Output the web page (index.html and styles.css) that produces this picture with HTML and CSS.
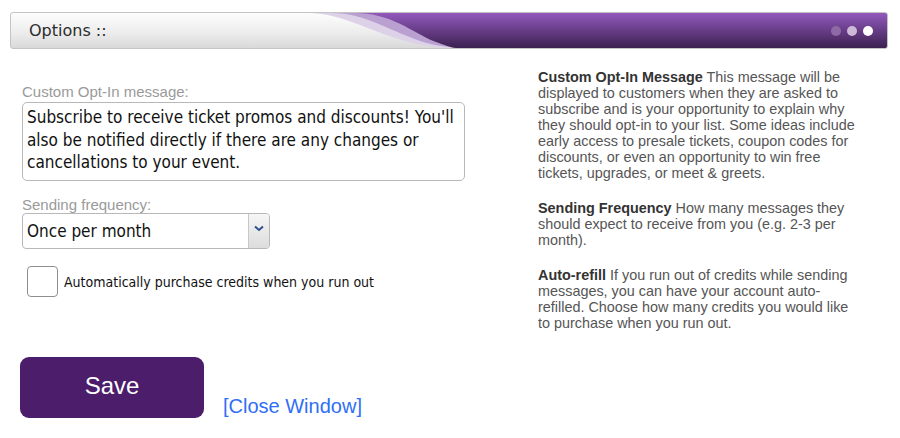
FILE: index.html
```html
<!DOCTYPE html>
<html lang="en">

<head>
    <meta charset="UTF-8">
    <meta name="viewport" content="width=device-width, initial-scale=1.0">
    <title>Options</title>
    <link rel="stylesheet" href="styles.css">
</head>

<body>
    <header class="titlebar">
        <span class="title">Options ::</span>
        <svg class="wave" viewBox="0 0 583 36" preserveAspectRatio="none">
            <defs>
                <linearGradient id="purple" x1="0" y1="0" x2="0" y2="1">
                    <stop offset="0" stop-color="#9259bd"/>
                    <stop offset="1" stop-color="#3c2150"/>
                </linearGradient>
            </defs>
            <path d="M4 0 C40 0 70 22 110 31 C130 36 150 36 175 36 L583 36 L583 0 Z" fill="#ddd1e8"/>
            <path d="M28 0 C62 0 88 20 120 30 C138 35 152 36 170 36 L583 36 L583 0 Z" fill="#b9a0d0"/>
            <path d="M50 0 C88 0 108 20 130 29 C140 33 146 35 152 36 L583 36 L583 0 Z" fill="url(#purple)"/>
        </svg>
        <div class="dots">
            <span class="dim"></span><span class="mid"></span><span></span>
        </div>
    </header>

    <main class="content">
        <form class="fields">
            <label class="label" for="msg">Custom Opt-In message:</label>
            <textarea id="msg" class="message">Subscribe to receive ticket promos and discounts! You'll also be notified directly if there are any changes or cancellations to your event.</textarea>

            <label class="label freq" for="freq">Sending frequency:</label>
            <div class="select">
                <span class="value">Once per month</span>
                <span class="arrow">
                    <svg width="10" height="7" viewBox="0 0 10 7"><path d="M1 1.5 L5 5 L9 1.5" fill="none" stroke="#2d4f8f" stroke-width="2"/></svg>
                </span>
            </div>

            <div class="check">
                <span class="box"></span>
                <span>Automatically purchase credits when you run out</span>
            </div>

            <div class="actions">
                <button type="button" class="save">Save</button>
                <a href="#" class="close">[Close Window]</a>
            </div>
        </form>

        <aside class="help">
            <p><b>Custom Opt-In Message</b> This message will be displayed to customers when they are asked to subscribe and is your opportunity to explain why they should opt-in to your list. Some ideas include early access to presale tickets, coupon codes for discounts, or even an opportunity to win free tickets, upgrades, or meet &amp; greets.</p>
            <p><b>Sending Frequency</b> How many messages they should expect to receive from you (e.g. 2-3 per month).</p>
            <p><b>Auto-refill</b> If you run out of credits while sending messages, you can have your account auto-refilled. Choose how many credits you would like to purchase when you run out.</p>
        </aside>
    </main>
</body>

</html>
```

FILE: styles.css
```css
body {
    margin: 0;
    padding: 0;
    background: #fff;
    font-family: "Liberation Sans", Arial, sans-serif;
}

.titlebar {
    position: relative;
    margin: 12px 12px 0 10px;
    height: 35px;
    border: 1px solid #c4c4c4;
    border-radius: 3px;
    background: linear-gradient(#fdfdfd, #ededed 55%, #d9d9d9);
    display: flex;
    align-items: center;
    overflow: hidden;
}

.title {
    position: relative;
    z-index: 1;
    padding-left: 18px;
    font-family: "DejaVu Sans", Verdana, sans-serif;
    font-size: 16px;
    color: #2b2b2b;
}

.wave {
    position: absolute;
    top: 0;
    right: 0;
    width: 583px;
    height: 100%;
}

.dots {
    position: absolute;
    right: 14px;
    top: 13px;
    display: flex;
    gap: 6px;
}

.dots span {
    width: 10px;
    height: 10px;
    border-radius: 50%;
    background: #fff;
}

.dots span.dim {
    background: #8d6aa6;
}

.dots span.mid {
    background: #cdbad9;
}

.content {
    display: flex;
    padding-top: 20px;
}

.fields {
    width: 444px;
    padding-left: 22px;
    display: flex;
    flex-direction: column;
}

.label {
    font-size: 15px;
    line-height: 17px;
    color: #9a9a9a;
    margin-top: 14px;
}

.label.freq {
    margin-top: 15px;
}

.message {
    box-sizing: border-box;
    width: 443px;
    height: 79px;
    margin: 2px 0 0;
    padding: 3px 4px;
    border: 1px solid #b8b8b8;
    border-radius: 5px;
    font-family: "DejaVu Sans Condensed", "DejaVu Sans", Verdana, sans-serif;
    font-size: 17px;
    line-height: 22.5px;
    color: #111;
    resize: none;
    overflow: hidden;
}

.select {
    box-sizing: border-box;
    width: 248px;
    height: 36px;
    margin-top: 0;
    border: 1px solid #b8b8b8;
    border-radius: 4px;
    display: flex;
    align-items: center;
    font-family: "DejaVu Sans Condensed", "DejaVu Sans", Verdana, sans-serif;
    font-size: 17px;
    color: #111;
    overflow: hidden;
}

.select .value {
    flex: 1;
    padding-left: 4px;
}

.select .arrow {
    width: 21px;
    height: 100%;
    border-left: 1px solid #c8c8c8;
    background: linear-gradient(#f6f6f6, #dcdcdc);
    display: flex;
    justify-content: center;
    padding-top: 11px;
    box-sizing: border-box;
}

.check {
    display: flex;
    align-items: center;
    gap: 6px;
    margin: 17px 0 0 5px;
    font-family: "DejaVu Sans Condensed", "DejaVu Sans", Verdana, sans-serif;
    font-size: 14px;
    color: #111;
}

.check .box {
    width: 29px;
    height: 29px;
    border: 1px solid #8e8e8e;
    border-radius: 4px;
    background: #fff;
}

.actions {
    display: flex;
    align-items: flex-end;
    margin-top: 60px;
}

.save {
    width: 184px;
    height: 61px;
    margin-left: -2px;
    border: none;
    border-radius: 9px;
    background: #4b1d6b;
    color: #fff;
    font-family: "Liberation Sans", Arial, sans-serif;
    font-size: 24px;
    padding: 0 0 4px;
}

.close {
    margin-left: 19px;
    margin-bottom: 0;
    font-size: 20px;
    color: #2f6ef6;
    text-decoration: none;
}

.help {
    margin-left: 72px;
    width: 326px;
    font-size: 14.4px;
    line-height: 16px;
    color: #555;
}

.help p {
    margin: 0 0 19px;
}

.help b {
    color: #333;
}
```
